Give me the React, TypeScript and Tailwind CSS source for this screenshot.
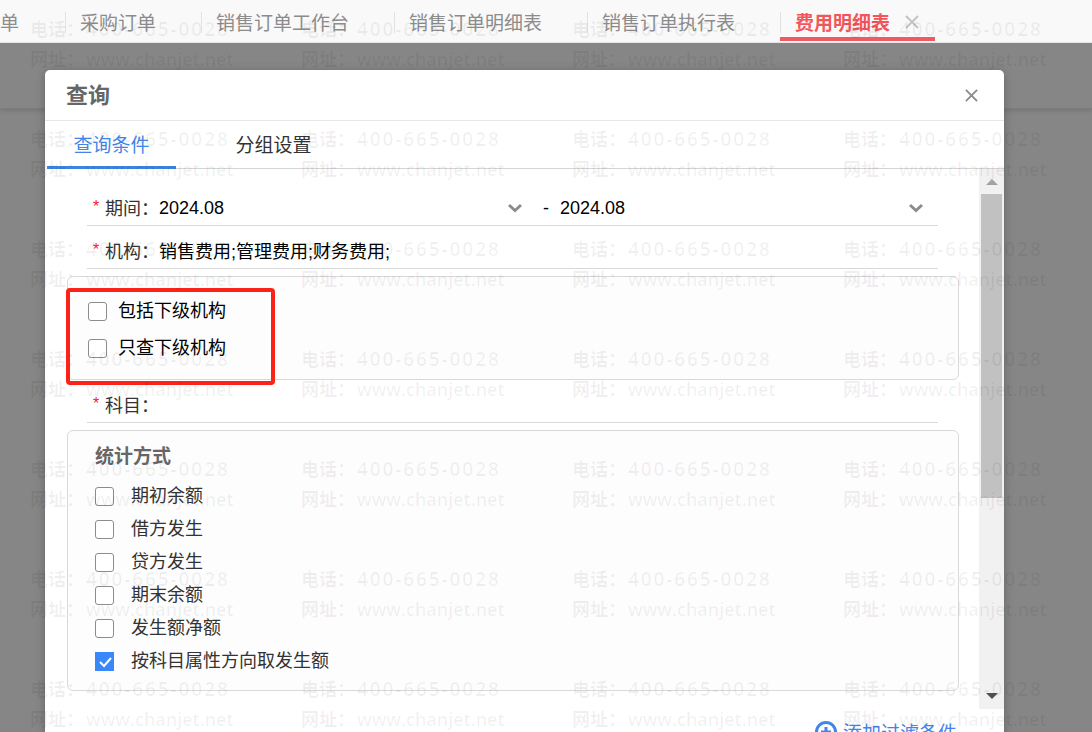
import { useState } from 'react';

const pageTabs = ['单', '采购订单', '销售订单工作台', '销售订单明细表', '销售订单执行表'];

const orgOptions = ['包括下级机构', '只查下级机构'];

const statOptions = [
  { text: '期初余额', checked: false },
  { text: '借方发生', checked: false },
  { text: '贷方发生', checked: false },
  { text: '期末余额', checked: false },
  { text: '发生额净额', checked: false },
  { text: '按科目属性方向取发生额', checked: true },
];

function CloseIcon({ className }: { className: string }) {
  return (
    <svg viewBox="0 0 14 14" className={className} fill="none" stroke="currentColor" strokeWidth="2">
      <path d="M1 1l12 12M13 1L1 13" />
    </svg>
  );
}

function Checkbox({ id, defaultChecked }: { id: string; defaultChecked?: boolean }) {
  return (
    <span className="relative flex shrink-0">
      <input
        id={id}
        type="checkbox"
        defaultChecked={defaultChecked}
        className="peer h-[19px] w-[19px] appearance-none rounded-[3px] border border-[#8c8c8c] bg-white checked:rounded-none checked:border-[#3a87fb] checked:bg-[#3a87fb]"
      />
      <svg
        viewBox="0 0 19 19"
        className="pointer-events-none absolute inset-0 hidden h-[19px] w-[19px] peer-checked:block"
        fill="none"
        stroke="#fff"
        strokeWidth="2"
      >
        <path d="M5 10l4 4 7-8" />
      </svg>
    </span>
  );
}

function FieldLabel({ htmlFor, text }: { htmlFor: string; text: string }) {
  return (
    <label htmlFor={htmlFor} className="flex shrink-0 items-center pb-[2px] text-[#333]">
      <span className="w-3 font-['Liberation_Sans',sans-serif] text-base text-[#f5222d]">*</span>
      {text}：
    </label>
  );
}

function PeriodSelect({ id, label }: { id: string; label: string }) {
  return (
    <div className="relative flex-1">
      <select
        id={id}
        aria-label={label}
        className="block w-full appearance-none bg-transparent font-['Liberation_Sans',sans-serif] text-black outline-none"
      >
        <option>2024.08</option>
      </select>
      <svg
        viewBox="0 0 14 10"
        className="pointer-events-none absolute top-1/2 right-[9px] h-[10px] w-[14px] -translate-y-1/2"
        fill="none"
        stroke="#8c8c8c"
        strokeWidth="3"
      >
        <path d="M1 2l6 5.500 6-5.500" />
      </svg>
    </div>
  );
}

function Watermark() {
  return (
    <div
      aria-hidden="true"
      className="pointer-events-none absolute inset-0 grid auto-rows-[110px] grid-cols-[repeat(4,271px)] overflow-hidden pl-[30px] font-['Open_Sans','Noto_Sans_CJK_SC',sans-serif] text-[18px] leading-[30px] font-semibold whitespace-nowrap text-black/6"
    >
      {Array.from({ length: 28 }, (_, i) => (
        <div key={i} className="pt-[14px]">
          <div className="flex">
            <span className="w-[56px]">电话：</span>
            <span className="text-[19px] tracking-widest">400-665-0028</span>
          </div>
          <div className="flex">
            <span className="w-[56px]">网址：</span>
            <span>www.chanjet.net</span>
          </div>
        </div>
      ))}
    </div>
  );
}

export default function App() {
  const [tab, setTab] = useState(0);

  return (
    <div className="relative flex h-screen flex-col overflow-hidden bg-[#868686] font-['Noto_Sans_CJK_SC',sans-serif] text-[18px]">
      {/* Page tabs */}
      <nav className="flex h-[43px] shrink-0 overflow-hidden border-b border-[#e8e8e8] bg-[#f9f9f9] text-[19px] whitespace-nowrap text-[#8c8c8c]">
        {pageTabs.map((name, i) => (
          <a key={name} href="#" className="flex h-[44px] shrink-0 items-center">
            {i > 0 && <span className="mr-[14px] h-[21px] w-px bg-[#e2e2e6]" />}
            <span className={i > 0 ? 'pr-[45px]' : 'pr-[46px]'}>{name}</span>
          </a>
        ))}
        <div className="flex h-[41px] shrink-0 items-center border-b-4 border-[#ec5b62] pt-[7px] pr-4 font-bold text-[#f4555a]">
          <span className="mr-[14px] h-[21px] w-px bg-[#e2e2e6]" />
          <a href="#">费用明细表</a>
          <button aria-label="关闭标签" className="ml-[15px] text-[#c4c4c4]">
            <CloseIcon className="h-[14px] w-[14px]" />
          </button>
        </div>
      </nav>

      <div className="relative flex-1">
        <div className="h-[66px] border-b border-[#7c7c7c] shadow-[0_2px_4px_rgba(0,0,0,0.12)]" />

        {/* Query dialog */}
        <div
          role="dialog"
          aria-label="查询"
          className="absolute top-[27px] right-[88px] left-[45px] rounded-t-[5px] bg-white shadow-[0_2px_10px_rgba(0,0,0,0.25)]"
        >
          <header className="flex h-[51px] items-center justify-between border-b border-[#e6e6e6] pr-[26px] pl-[21px]">
            <h2 className="pb-1 text-[22px] leading-6 font-bold text-[#666]">查询</h2>
            <button aria-label="关闭" className="text-[#8c8c8c]">
              <CloseIcon className="h-[13px] w-[13px]" />
            </button>
          </header>

          <div className="ml-[2px] flex h-[48px] gap-[33px] border-b border-[#d4d4d4] text-[19px]">
            {['查询条件', '分组设置'].map((name, i) => (
              <button
                key={name}
                onClick={() => setTab(i)}
                className={`h-[48px] w-[129px] border-b-3 pt-[2px] ${
                  tab === i ? 'border-[#3f83e0] text-[#4285e8]' : 'border-transparent text-[#333]'
                }`}
              >
                {name}
              </button>
            ))}
          </div>

          <div className="ml-[2px] flex">
            <form className="min-w-0 flex-1 px-5 pt-[14px] pb-[18px]">
              <div className="mr-[21px] ml-5 flex h-[43px] items-center border-b border-[#d9d9d9] pt-2 pr-[6px] pl-[6px]">
                <FieldLabel htmlFor="period-from" text="期间" />
                <PeriodSelect id="period-from" label="开始期间" />
                <span className="w-[29px] pl-3 font-['Liberation_Sans',sans-serif]">-</span>
                <PeriodSelect id="period-to" label="结束期间" />
              </div>
              <div className="mr-[21px] ml-5 flex h-[43px] items-center border-b border-[#d9d9d9] pt-2 pr-[6px] pl-[6px]">
                <FieldLabel htmlFor="org" text="机构" />
                <input
                  id="org"
                  defaultValue="销售费用;管理费用;财务费用;"
                  className="min-w-0 flex-1 bg-transparent pt-[3px] font-['Liberation_Sans','Noto_Sans_CJK_SC',sans-serif] text-black outline-none"
                />
              </div>

              <div className="relative mt-[7px] h-[104px] rounded-[6px] border border-[#d9d9d9] bg-[#fdfdfd] pt-4 pl-5">
                {orgOptions.map((text, i) => (
                  <div key={text} className="flex h-[37px] items-center gap-[11px]">
                    <Checkbox id={`org-${i}`} />
                    <label htmlFor={`org-${i}`} className="pb-1 text-black">
                      {text}
                    </label>
                  </div>
                ))}
                {/* Highlight frame */}
                <div className="pointer-events-none absolute top-[11px] -left-[2px] h-[97px] w-[209px] rounded-[4px] border-4 border-[#fb2218]" />
              </div>

              <div className="mr-[21px] ml-5 flex h-[43px] items-center border-b border-[#d9d9d9] pt-2 pr-[6px] pl-[6px]">
                <FieldLabel htmlFor="subject" text="科目" />
                <input id="subject" className="min-w-0 flex-1 bg-transparent text-black outline-none" />
              </div>

              <fieldset className="mt-[7px] rounded-[6px] border border-[#d9d9d9] bg-[#fdfdfd] pt-[9px] pb-3 pl-[27px]">
                <h3 className="mb-[10px] text-[19px] leading-[30px] font-bold text-[#666]">统计方式</h3>
                {statOptions.map((opt, i) => (
                  <div key={opt.text} className="flex h-[33px] items-center gap-[17px]">
                    <Checkbox id={`stat-${i}`} defaultChecked={opt.checked} />
                    <label htmlFor={`stat-${i}`} className="pb-1 text-[#333]">
                      {opt.text}
                    </label>
                  </div>
                ))}
              </fieldset>
            </form>

            {/* Scrollbar */}
            <div className="flex w-[25px] shrink-0 flex-col items-center bg-[#f1f1f1]">
              <svg viewBox="0 0 12 6" className="mt-[10px] mb-[9px] h-[6px] w-[12px]" fill="#a3a3a3">
                <path d="M6 0l6 6H0z" />
              </svg>
              <div className="h-[304px] w-[21px] bg-[#c1c1c1]" />
              <svg viewBox="0 0 12 6" className="mt-auto mb-[10px] h-[6px] w-[12px]" fill="#505050">
                <path d="M0 0h12L6 6z" />
              </svg>
            </div>
          </div>

          <div className="flex h-[60px] items-start justify-end pt-[11px] pr-[47px]">
            <button className="flex items-center gap-[6px] text-[19px] leading-6 text-[#4285e8]">
              <svg viewBox="0 0 22 22" className="h-[22px] w-[22px]" fill="none" stroke="currentColor" strokeWidth="3">
                <circle cx="11" cy="11" r="9.500" />
                <path d="M11 6v10M6 11h10" />
              </svg>
              添加过滤条件
            </button>
          </div>
        </div>
      </div>

      <Watermark />
    </div>
  );
}
